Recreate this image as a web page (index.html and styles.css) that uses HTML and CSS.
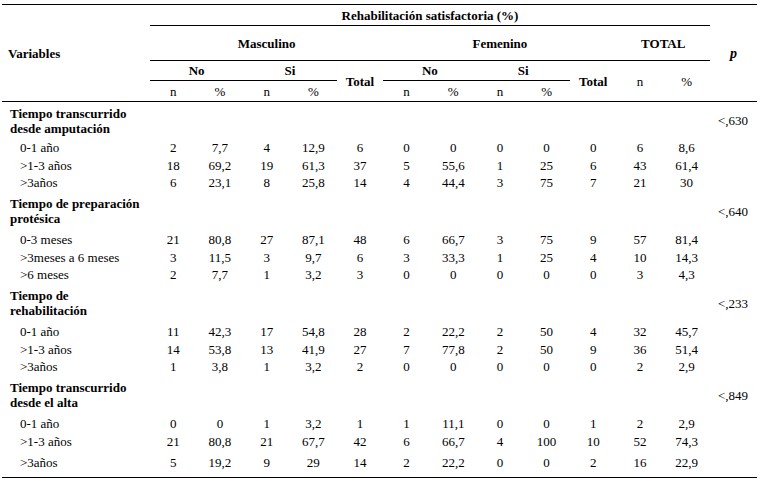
FILE: index.html
```html
<!DOCTYPE html>
<html lang="es">
<head>
<meta charset="utf-8">
<link rel="stylesheet" href="styles.css">
</head>
<body>
<table class="tbl">
  <colgroup>
    <col class="c-var">
    <col class="c-num"><col class="c-num"><col class="c-num"><col class="c-num"><col class="c-num">
    <col class="c-num"><col class="c-num"><col class="c-num"><col class="c-num"><col class="c-num">
    <col class="c-num"><col class="c-num">
    <col class="c-p">
  </colgroup>
  <thead>
    <tr class="h1">
      <th rowspan="4" class="var-h">Variables</th>
      <th colspan="12" class="ul">Rehabilitación satisfactoria (%)</th>
      <th rowspan="4" class="p-h">p</th>
    </tr>
    <tr class="h2">
      <th colspan="5" class="ul">Masculino</th>
      <th colspan="5" class="ul">Femenino</th>
      <th colspan="2" class="ul">TOTAL</th>
    </tr>
    <tr class="h3">
      <th colspan="2" class="ul">No</th>
      <th colspan="2" class="ul">Si</th>
      <th rowspan="2">Total</th>
      <th colspan="2" class="ul">No</th>
      <th colspan="2" class="ul">Si</th>
      <th rowspan="2">Total</th>
      <th rowspan="2" class="sub">n</th>
      <th rowspan="2" class="sub">%</th>
    </tr>
    <tr class="h4">
      <th class="sub">n</th><th class="sub">%</th><th class="sub">n</th><th class="sub">%</th>
      <th class="sub">n</th><th class="sub">%</th><th class="sub">n</th><th class="sub">%</th>
    </tr>
  </thead>
  <tbody>
    <tr class="grp first"><td class="gname">Tiempo transcurrido<br>desde amputación</td><td colspan="12"></td><td class="pv">&lt;,630</td></tr>
    <tr class="row"><td class="lbl">0-1 año</td><td>2</td><td>7,7</td><td>4</td><td>12,9</td><td>6</td><td>0</td><td>0</td><td>0</td><td>0</td><td>0</td><td>6</td><td>8,6</td><td></td></tr>
    <tr class="row"><td class="lbl">&gt;1-3 años</td><td>18</td><td>69,2</td><td>19</td><td>61,3</td><td>37</td><td>5</td><td>55,6</td><td>1</td><td>25</td><td>6</td><td>43</td><td>61,4</td><td></td></tr>
    <tr class="row"><td class="lbl">&gt;3años</td><td>6</td><td>23,1</td><td>8</td><td>25,8</td><td>14</td><td>4</td><td>44,4</td><td>3</td><td>75</td><td>7</td><td>21</td><td>30</td><td></td></tr>

    <tr class="grp"><td class="gname">Tiempo de preparación<br>protésica</td><td colspan="12"></td><td class="pv">&lt;,640</td></tr>
    <tr class="row"><td class="lbl">0-3 meses</td><td>21</td><td>80,8</td><td>27</td><td>87,1</td><td>48</td><td>6</td><td>66,7</td><td>3</td><td>75</td><td>9</td><td>57</td><td>81,4</td><td></td></tr>
    <tr class="row"><td class="lbl">&gt;3meses a 6 meses</td><td>3</td><td>11,5</td><td>3</td><td>9,7</td><td>6</td><td>3</td><td>33,3</td><td>1</td><td>25</td><td>4</td><td>10</td><td>14,3</td><td></td></tr>
    <tr class="row"><td class="lbl">&gt;6 meses</td><td>2</td><td>7,7</td><td>1</td><td>3,2</td><td>3</td><td>0</td><td>0</td><td>0</td><td>0</td><td>0</td><td>3</td><td>4,3</td><td></td></tr>

    <tr class="grp"><td class="gname">Tiempo de<br>rehabilitación</td><td colspan="12"></td><td class="pv">&lt;,233</td></tr>
    <tr class="row"><td class="lbl">0-1 año</td><td>11</td><td>42,3</td><td>17</td><td>54,8</td><td>28</td><td>2</td><td>22,2</td><td>2</td><td>50</td><td>4</td><td>32</td><td>45,7</td><td></td></tr>
    <tr class="row"><td class="lbl">&gt;1-3 años</td><td>14</td><td>53,8</td><td>13</td><td>41,9</td><td>27</td><td>7</td><td>77,8</td><td>2</td><td>50</td><td>9</td><td>36</td><td>51,4</td><td></td></tr>
    <tr class="row"><td class="lbl">&gt;3años</td><td>1</td><td>3,8</td><td>1</td><td>3,2</td><td>2</td><td>0</td><td>0</td><td>0</td><td>0</td><td>0</td><td>2</td><td>2,9</td><td></td></tr>

    <tr class="grp"><td class="gname">Tiempo transcurrido<br>desde el alta</td><td colspan="12"></td><td class="pv">&lt;,849</td></tr>
    <tr class="row"><td class="lbl">0-1 año</td><td>0</td><td>0</td><td>1</td><td>3,2</td><td>1</td><td>1</td><td>11,1</td><td>0</td><td>0</td><td>1</td><td>2</td><td>2,9</td><td></td></tr>
    <tr class="row"><td class="lbl">&gt;1-3 años</td><td>21</td><td>80,8</td><td>21</td><td>67,7</td><td>42</td><td>6</td><td>66,7</td><td>4</td><td>100</td><td>10</td><td>52</td><td>74,3</td><td></td></tr>
    <tr class="row last"><td class="lbl">&gt;3años</td><td>5</td><td>19,2</td><td>9</td><td>29</td><td>14</td><td>2</td><td>22,2</td><td>0</td><td>0</td><td>2</td><td>16</td><td>22,9</td><td></td></tr>
  </tbody>
</table>
</body>
</html>
```
FILE: styles.css
```css
html, body {
  margin: 0;
  padding: 0;
  background: #ffffff;
}
body {
  font-family: "Liberation Serif", "Times New Roman", serif;
  font-size: 13px;
  color: #000000;
}
.tbl {
  margin: 4px 0 0 2px;
  width: 755px;
  table-layout: fixed;
  border-collapse: collapse;
  border-top: 1px solid #000;
  border-bottom: 1px solid #000;
}
.c-var { width: 148px; }
.c-num { width: 46.67px; }
.c-p { width: 47px; }
.tbl th, .tbl td {
  padding: 0;
  text-align: center;
  vertical-align: middle;
  line-height: 15px;
  white-space: nowrap;
}
.tbl th { font-weight: bold; }
.tbl thead { border-bottom: 1px solid #000; }
.tbl th.ul { border-bottom: 1px solid #000; }
.tbl th.sub { font-weight: normal; }
.tbl th.var-h { text-align: left; padding-left: 6px; }
.tbl th.p-h { font-style: italic; font-size: 14px; }
.h1 { height: 21px; }
.h2 { height: 35px; }
.h3 { height: 20px; }
.h4 { height: 21px; }
.grp { height: 39.5px; }
.grp.first { height: 37.5px; }
.grp .gname { text-align: left; font-weight: bold; padding-left: 8px; }
.grp .pv { text-align: left; padding-left: 8px; }
.row { height: 17.5px; }
.row.last { height: 27px; }
.row.last td { padding-bottom: 2px; }
.row .lbl { text-align: left; padding-left: 18px; }
```
